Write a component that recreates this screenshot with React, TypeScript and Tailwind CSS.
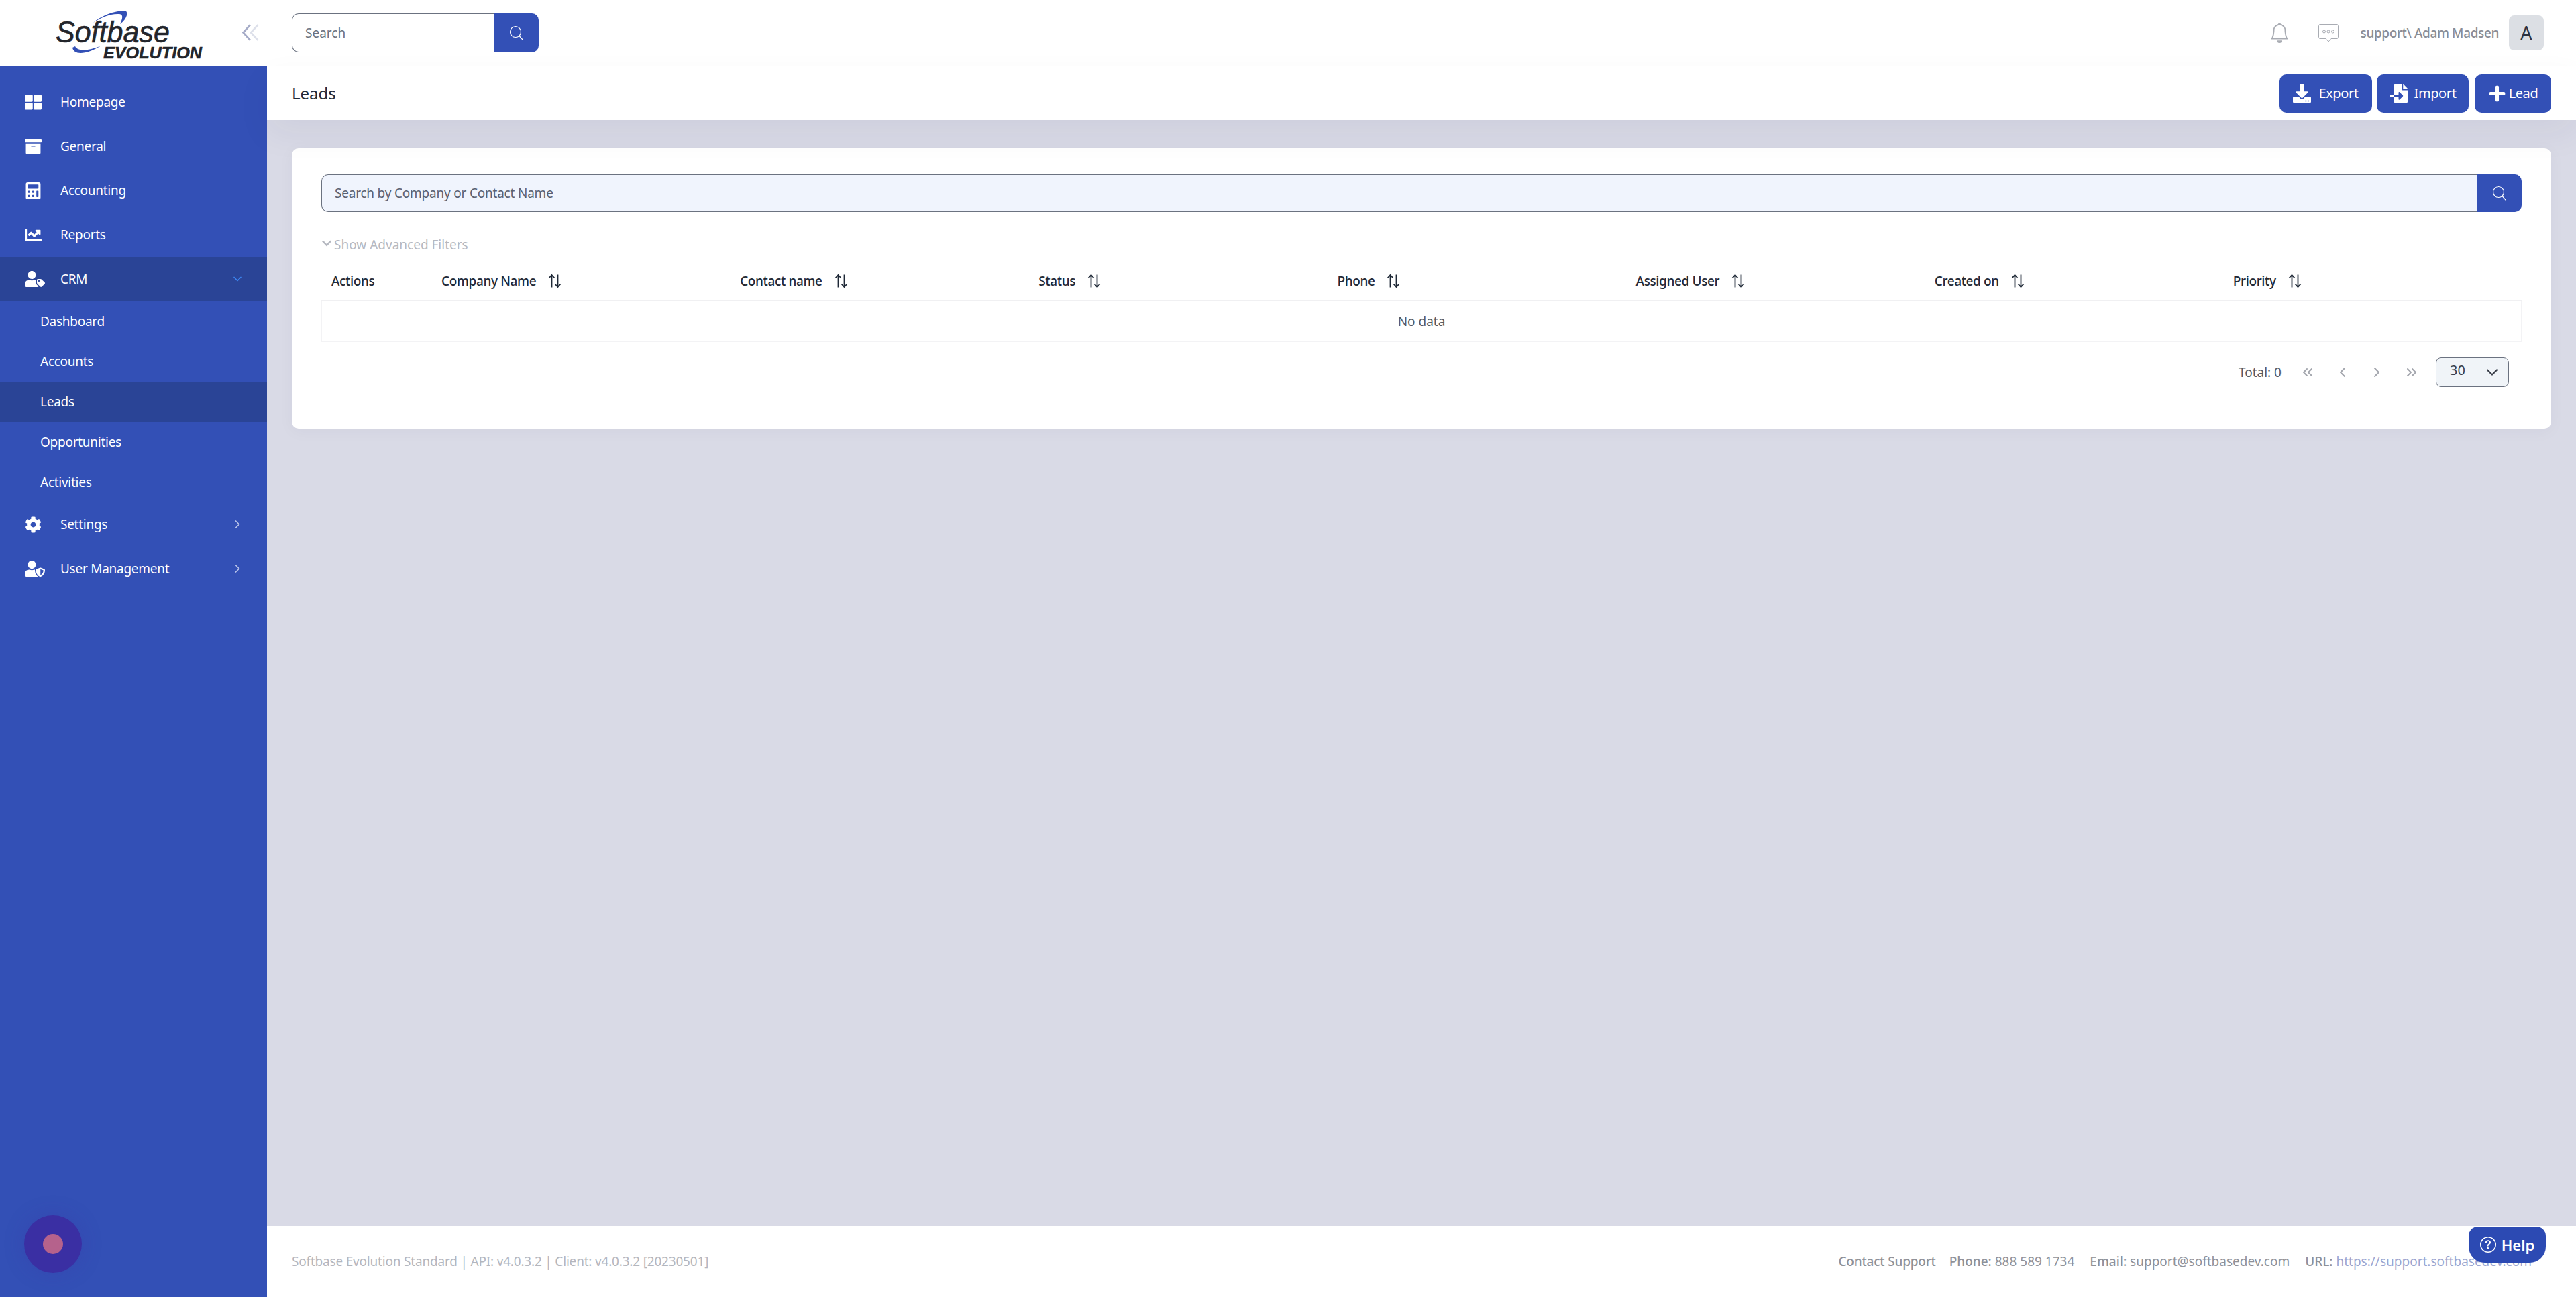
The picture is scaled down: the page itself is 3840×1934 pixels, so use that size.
import type { ReactNode } from 'react';
import {
  FaThLarge,
  FaArchive,
  FaCalculator,
  FaChartLine,
  FaUserTag,
  FaCog,
  FaUserShield,
  FaDownload,
  FaFileImport,
  FaPlus,
  FaChevronDown,
} from 'react-icons/fa';
import { BsBell, BsQuestionCircle } from 'react-icons/bs';
import { LuChevronDown, LuChevronRight, LuChevronLeft, LuChevronsLeft, LuChevronsRight } from 'react-icons/lu';

const columns = ['Company Name', 'Contact name', 'Status', 'Phone', 'Assigned User', 'Created on', 'Priority'];

const crmChildren = [
  { label: 'Dashboard' },
  { label: 'Accounts' },
  { label: 'Leads', active: true },
  { label: 'Opportunities' },
  { label: 'Activities' },
];

function Logo() {
  return (
    <svg viewBox="0 0 398 98" className="w-[398px] h-[98px]">
      <path d="M139 34 C150 24 170 16 186 16 C192 17 190 28 179 36 C183 27 184 22 178 21 C165 20 150 26 139 34 Z" fill="#3350b6" />
      <path d="M108 71 C110 82 128 82 151 68 C134 75 117 78 112 69 Z" fill="#3350b6" />
      <text x="83" y="63" fontFamily="'Liberation Sans', sans-serif" fontStyle="italic" fontSize="45" fill="#23252b" stroke="#23252b" strokeWidth="0.6" textLength="170" lengthAdjust="spacingAndGlyphs">Softbase</text>
      <text x="154" y="87" fontFamily="'Liberation Sans', sans-serif" fontStyle="italic" fontWeight="700" fontSize="24" fill="#23252b" stroke="#23252b" strokeWidth="0.5" textLength="147" lengthAdjust="spacingAndGlyphs">EVOLUTION</text>
    </svg>
  );
}

function SearchIcon() {
  return (
    <svg viewBox="0 0 22 22" className="w-[22px] h-[22px]" fill="none" stroke="#fff" strokeWidth="1.2">
      <circle cx="9.500" cy="9.500" r="8" />
      <path d="M15 15.500 20.500 21.500" />
    </svg>
  );
}

function SortIcon() {
  return (
    <svg viewBox="0 0 20 20" className="w-5 h-5 ml-[18px]" fill="none" stroke="#1f2937" strokeWidth="1.8">
      <path d="M5.500 19.500V1M1.500 5.500 5.500 1l4 4.500" />
      <path d="M14.500 .5V19M10.500 14.500l4 4.500 4-4.500" />
    </svg>
  );
}

function NavItem({ icon, label, chevron }: { icon: ReactNode; label: string; chevron?: 'down' | 'right' }) {
  return (
    <div className={`h-[66px] flex items-center pl-[37px] pr-[34px] ${chevron === 'down' ? 'bg-[#2a4496]' : ''}`}>
      <span className="w-[53px] flex items-center text-white text-[25px]">{icon}</span>
      <span className="flex-1 text-white text-[19px] tracking-[-0.014em]">{label}</span>
      {chevron === 'down' && <LuChevronDown className="text-[#3d86f0] text-[20px]" />}
      {chevron === 'right' && <LuChevronRight className="text-[#b9c4ea] text-[20px]" />}
    </div>
  );
}

function ActionButton({ icon, label, width, gap }: { icon: ReactNode; label: string; width: string; gap: string }) {
  return (
    <button className={`h-[57px] ${width} ${gap} flex items-center justify-center rounded-[10px] bg-[#3350b6] text-white text-[20px] tracking-[-0.02em]`}>
      <span className="text-[27px]">{icon}</span>
      {label}
    </button>
  );
}

export default function App() {
  return (
    <div className="h-screen flex bg-[#d9dae6] font-['Noto_Sans',sans-serif] overflow-hidden relative">
      <aside className="w-[398px] shrink-0 bg-[#3350b6] flex flex-col">
        <div className="h-[98px] bg-white relative">
          <Logo />
          <svg viewBox="0 0 24 24" className="absolute left-[360px] top-[36px] w-[26px] h-[25px]" fill="none" strokeWidth="2.600">
            <path d="M12 1 2 12l10 11" stroke="#a5abc7" />
            <path d="M23 1 13 12l10 11" stroke="#dde0ea" />
          </svg>
        </div>
        <nav className="pt-[21px]">
          <NavItem icon={<FaThLarge />} label="Homepage" />
          <NavItem icon={<FaArchive />} label="General" />
          <NavItem icon={<FaCalculator />} label="Accounting" />
          <NavItem icon={<FaChartLine />} label="Reports" />
          <NavItem icon={<FaUserTag className="text-[30px]" />} label="CRM" chevron="down" />
          {crmChildren.map((item) => (
            <div
              key={item.label}
              className={`h-[60px] flex items-center pl-[60px] text-white text-[19px] tracking-[-0.014em] ${item.active ? 'bg-[#2a4496]' : ''}`}
            >
              {item.label}
            </div>
          ))}
          <NavItem icon={<FaCog />} label="Settings" chevron="right" />
          <NavItem icon={<FaUserShield className="text-[30px]" />} label="User Management" chevron="right" />
        </nav>
      </aside>

      <div className="flex-1 flex flex-col min-w-0">
        <header className="h-[99px] shrink-0 bg-white border-b border-[#eeeff1] flex items-center pl-[37px] pr-[48px]">
          <div className="flex h-[58px] w-[368px]">
            <div className="flex-1 border border-[#6b7280] border-r-0 rounded-l-[10px] flex items-center pl-[19px] text-[19px] text-[#6b7280]">
              Search
            </div>
            <button className="w-[66px] bg-[#3350b6] rounded-r-[10px] flex items-center justify-center">
              <SearchIcon />
            </button>
          </div>
          <div className="ml-auto flex items-center">
            <BsBell className="text-[30px] text-[#a9acb3]" />
            <svg viewBox="0 0 30 27" className="w-[30px] h-[27px] ml-[43px]" fill="none" stroke="#a9acb3" strokeWidth="1">
              <path d="M2.500 .5h25a2 2 0 0 1 2 2v17a2 2 0 0 1-2 2H19l-4 4.500-4-4.500H2.500a2 2 0 0 1-2-2v-17a2 2 0 0 1 2-2Z" />
              <circle cx="8.500" cy="11" r="2" />
              <circle cx="15" cy="11" r="2" />
              <circle cx="21.500" cy="11" r="2" />
            </svg>
            <span className="ml-[33px] text-[19px] tracking-[-0.02em] font-medium text-[#8a8d96]">support\ Adam Madsen</span>
            <div className="ml-[15px] w-[52px] h-[52px] rounded-[8px] bg-[#dcdfe4] flex items-center justify-center text-[27px] text-[#2b3240]">
              A
            </div>
          </div>
        </header>

        <div className="h-[80px] shrink-0 bg-white flex items-center justify-between px-[37px] shadow-[0_20px_50px_rgba(40,40,80,0.06)] relative">
          <h1 className="text-[24px] text-[#1f2937] -mt-[1px]">Leads</h1>
          <div className="flex">
            <ActionButton icon={<FaDownload />} label="Export" width="w-[138px]" gap="gap-[11px]" />
            <div className="ml-[7px]">
              <ActionButton icon={<FaFileImport />} label="Import" width="w-[137px]" gap="gap-[10px]" />
            </div>
            <div className="ml-[9px]">
              <ActionButton icon={<FaPlus />} label="Lead" width="w-[114px]" gap="gap-[4px]" />
            </div>
          </div>
        </div>

        <main className="flex-1 px-[37px] pt-[42px]">
          <section className="bg-white rounded-[10px] px-[44px] pt-[39px] h-[418px] shadow-[0_4px_24px_rgba(40,40,80,0.04)]">
            <div className="flex h-[56px]">
              <div className="flex-1 bg-[#f0f4fd] border border-[#6b7280] border-r-0 rounded-l-[10px] flex items-center pl-[19px] text-[19px] tracking-[-0.011em] text-[#5a6070]">
                <span className="w-px h-[24px] bg-[#111827] -mr-px" />
                Search by Company or Contact Name
              </div>
              <button className="w-[67px] bg-[#3350b6] rounded-r-[10px] flex items-center justify-center">
                <SearchIcon />
              </button>
            </div>

            <div className="mt-[35px] h-[28px] flex items-center text-[19px] text-[#b5b8c0]">
              <FaChevronDown className="text-[16px] mr-[3px] -mt-[4px]" />
              Show Advanced Filters
            </div>

            <div className="mt-[10px] h-[60px] pt-[2px] grid grid-cols-[164px_repeat(7,1fr)] items-center border-b-2 border-[#f0f0f2] text-[19px] tracking-[-0.02em] font-medium text-[#1f2937]">
              <div className="pl-[15px]">Actions</div>
              {columns.map((name) => (
                <div key={name} className="pl-[15px] flex items-center">
                  {name}
                  <SortIcon />
                </div>
              ))}
            </div>
            <div className="h-[61px] flex items-center justify-center border border-t-0 border-[#f3f3f5] text-[19px] text-[#555a64]">
              No data
            </div>

            <div className="mt-[23px] flex items-center justify-end pr-[19px] text-[#a3a6ad]">
              <span className="text-[19px] text-[#555a64] mr-[27px]">Total: 0</span>
              <LuChevronsLeft className="text-[24px] mr-[28px]" />
              <LuChevronLeft className="text-[24px] mr-[27px]" />
              <LuChevronRight className="text-[24px] mr-[28px]" />
              <LuChevronsRight className="text-[24px] mr-[24px]" />
              <div className="w-[109px] h-[44px] bg-[#f0f4f8] border border-[#6b7280] rounded-[8px] flex items-center justify-between pl-[20px] pr-[10px] text-[#3a3f4a]">
                <span className="text-[20px] -mt-[6px]">30</span>
                <LuChevronDown className="text-[28px]" />
              </div>
            </div>
          </section>
        </main>

        <footer className="h-[106px] shrink-0 bg-white flex items-center justify-between pl-[37px] pr-[66px] text-[19px]">
          <span className="text-[#b4b6bd] tracking-[-0.01em]">Softbase Evolution Standard | API: v4.0.3.2 | Client: v4.0.3.2 [20230501]</span>
          <span className="text-[#8f9198] flex gap-[23px]">
            <span className="font-medium tracking-[-0.01em] -mr-[3px]">Contact Support</span>
            <span><span className="font-medium">Phone:</span> 888 589 1734</span>
            <span><span className="font-medium">Email:</span> support@softbasedev.com</span>
            <span><span className="font-medium">URL:</span> <span className="text-[#9aa5d0]">https://support.softbasedev.com</span></span>
          </span>
        </footer>
      </div>

      <div className="absolute left-[36px] top-[1812px] w-[86px] h-[86px] rounded-full bg-[#3a2fa3] flex items-center justify-center shadow-[0_0_30px_rgba(58,47,163,0.25)]">
        <div className="w-[30px] h-[30px] rounded-full bg-[#b5628c]" />
      </div>
      <button className="absolute left-[3680px] top-[1829px] w-[115px] h-[54px] rounded-[24px] rounded-t-[14px] bg-[#2c4ab3] text-white text-[22px] font-semibold flex items-center justify-center gap-2">
        <BsQuestionCircle className="text-[24px]" />
        Help
      </button>
    </div>
  );
}
